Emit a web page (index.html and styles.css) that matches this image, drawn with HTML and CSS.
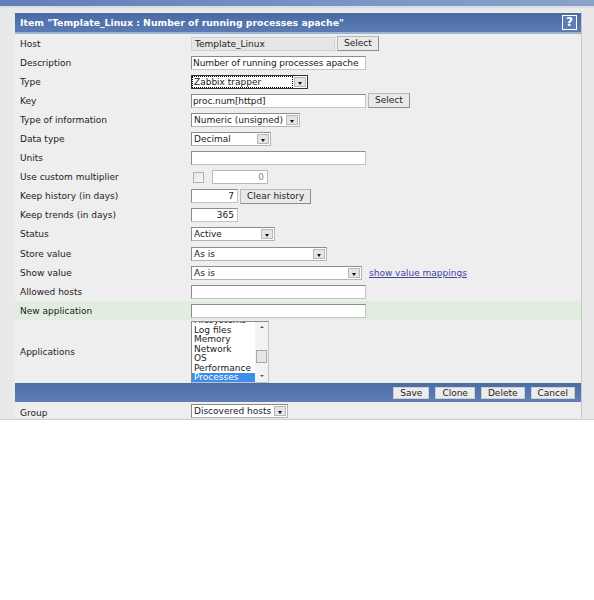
FILE: index.html
```html
<!doctype html>
<html lang="en">
  <head>
    <meta charset="UTF-8" />
    <title>Configuration of items</title>
    <link rel="stylesheet" href="styles.css">
  </head>
  <body>
    <div class="screen">
      <div class="topbar"></div>
      <div class="workspace">
        <form class="item-form">
          <div class="form-header">
            <span class="form-title">Item "Template_Linux : Number of running processes apache"</span>
            <span class="help-icon">?</span>
          </div>

          <div class="row">
            <span class="label">Host</span>
            <span class="field">
              <span class="input readonly w-host">Template_Linux</span>
              <span class="button">Select</span>
            </span>
          </div>
          <div class="row">
            <span class="label">Description</span>
            <span class="field"><span class="input w-wide">Number of running processes apache</span></span>
          </div>
          <div class="row">
            <span class="label">Type</span>
            <span class="field">
              <span class="select w-type"><span class="value focused">Zabbix trapper</span><span class="arrow"></span></span>
            </span>
          </div>
          <div class="row">
            <span class="label">Key</span>
            <span class="field">
              <span class="input w-wide">proc.num[httpd]</span>
              <span class="button">Select</span>
            </span>
          </div>
          <div class="row">
            <span class="label">Type of information</span>
            <span class="field">
              <span class="select w-info"><span class="value">Numeric (unsigned)</span><span class="arrow"></span></span>
            </span>
          </div>
          <div class="row">
            <span class="label">Data type</span>
            <span class="field">
              <span class="select w-data"><span class="value">Decimal</span><span class="arrow"></span></span>
            </span>
          </div>
          <div class="row">
            <span class="label">Units</span>
            <span class="field"><span class="input w-wide"></span></span>
          </div>
          <div class="row">
            <span class="label">Use custom multiplier</span>
            <span class="field">
              <span class="checkbox"></span>
              <span class="input num disabled w-mult">0</span>
            </span>
          </div>
          <div class="row">
            <span class="label">Keep history (in days)</span>
            <span class="field">
              <span class="input num w-days">7</span>
              <span class="button">Clear history</span>
            </span>
          </div>
          <div class="row">
            <span class="label">Keep trends (in days)</span>
            <span class="field"><span class="input num w-days">365</span></span>
          </div>
          <div class="row">
            <span class="label">Status</span>
            <span class="field">
              <span class="select w-status"><span class="value">Active</span><span class="arrow"></span></span>
            </span>
          </div>
          <div class="row">
            <span class="label">Store value</span>
            <span class="field">
              <span class="select w-store"><span class="value">As is</span><span class="arrow"></span></span>
            </span>
          </div>
          <div class="row">
            <span class="label">Show value</span>
            <span class="field">
              <span class="select w-show"><span class="value">As is</span><span class="arrow"></span></span>
              <a class="link" href="#">show value mappings</a>
            </span>
          </div>
          <div class="row">
            <span class="label">Allowed hosts</span>
            <span class="field"><span class="input w-wide"></span></span>
          </div>
          <div class="row highlight">
            <span class="label">New application</span>
            <span class="field"><span class="input w-wide"></span></span>
          </div>
          <div class="row tall">
            <span class="label">Applications</span>
            <span class="field">
              <span class="listbox">
                <span class="options">
                  <span class="option">Filesystems</span>
                  <span class="option">Log files</span>
                  <span class="option">Memory</span>
                  <span class="option">Network</span>
                  <span class="option">OS</span>
                  <span class="option">Performance</span>
                  <span class="option selected">Processes</span>
                </span>
                <span class="scrollbar">
                  <span class="scroll-up"></span>
                  <span class="scroll-track"><span class="scroll-thumb"></span></span>
                  <span class="scroll-down"></span>
                </span>
              </span>
            </span>
          </div>

          <div class="form-footer">
            <span class="button">Save</span>
            <span class="button">Clone</span>
            <span class="button">Delete</span>
            <span class="button">Cancel</span>
          </div>

          <div class="row short">
            <span class="label">Group</span>
            <span class="field">
              <span class="select w-group"><span class="value">Discovered hosts</span><span class="arrow"></span></span>
            </span>
          </div>
        </form>
      </div>
    </div>
  </body>
</html>
```
FILE: styles.css
```css
* {
  margin: 0;
  padding: 0;
  box-sizing: border-box;
}

body {
  font-family: 'DejaVu Sans', Verdana, sans-serif;
  font-size: 9px;
  color: #222;
  background: #fff;
}

.screen {
  height: 420px;
  background: #e9e9e9;
  border-bottom: 1px solid #cfcfcf;
  overflow: hidden;
}

.topbar {
  height: 8px;
  background: linear-gradient(to right, #5f7fb6, #7896c6 60%, #8aa2c9);
  border-bottom: 2px solid #d8dde6;
}

.workspace {
  padding: 4px 11px 0 15px;
  display: flex;
}

.item-form {
  width: 567px;
  background: #eeeeee;
  border-right: 1px solid #c8c8c8;
}

/* title bar */
.form-header {
  height: 21px;
  margin-top: 1px;
  background: linear-gradient(to bottom, #4a6aa5, #5a7bb3);
  border-bottom: 2px solid #9fb3d4;
  display: flex;
  align-items: center;
  justify-content: space-between;
  padding: 0 4px 0 5px;
}

.form-title {
  color: #fff;
  font-weight: bold;
  font-size: 9.3px;
}

.help-icon {
  width: 15px;
  height: 15px;
  border: 1px solid #fff;
  color: #fff;
  font-weight: bold;
  font-size: 12px;
  line-height: 13px;
  text-align: center;
  background: #5b7cb4;
}

/* form rows */
.row {
  display: grid;
  grid-template-columns: 171px 1fr;
  align-items: center;
  height: 19.1px;
  padding-left: 5px;
}

.row.highlight {
  background: #e0eddf;
}

.row.tall {
  height: 63px;
}

.row.short {
  height: 16px;
  align-items: end;
}

.label {
  color: #222;
}

.field {
  display: flex;
  align-items: center;
  gap: 2px;
}

.input {
  display: inline-block;
  height: 14px;
  line-height: 12px;
  padding: 0 1px;
  background: #fff;
  border: 1px solid #8c8c8c;
  border-right-color: #c4c4c4;
  border-bottom-color: #c4c4c4;
  white-space: nowrap;
  overflow: hidden;
}

.input.readonly {
  background: #e6e6e6;
  border-color: #d0d0d0;
  padding-left: 3px;
}

.input.num {
  text-align: right;
  padding-right: 3px;
}

.input.disabled {
  color: #888;
  border-color: #b8b8b8;
}

.w-host { width: 144px; }
.w-wide { width: 175px; letter-spacing: -0.1px; }
.w-mult { width: 56px; margin-left: 6px; }
.w-days { width: 47px; }

.checkbox {
  width: 11px;
  height: 11px;
  margin-left: 2px;
  border: 1px solid #b0b0b0;
  background: linear-gradient(to bottom right, #e4e4e4, #fafafa);
}

.button {
  display: inline-block;
  height: 15px;
  line-height: 13px;
  padding: 0 6px;
  background: #e9e9e9;
  border: 1px solid #b9b9b9;
  border-right-color: #8e8e8e;
  border-bottom-color: #8e8e8e;
  color: #222;
}

/* drop-down lists */
.select {
  display: inline-flex;
  height: 14px;
  background: #fff;
  border: 1px solid #8c8c8c;
  border-right-color: #b5b5b5;
  border-bottom-color: #b5b5b5;
}

.select .value {
  flex: 1;
  line-height: 12px;
  padding: 0 2px;
  white-space: nowrap;
  overflow: hidden;
}

.select .value.focused {
  outline: 1px dotted #000;
  outline-offset: -1px;
  background: #fff;
}

.arrow {
  width: 12px;
  margin: 1px;
  background: #e4e4e4;
  border: 1px solid #b8b8b8;
  position: relative;
}

.arrow::after {
  content: '';
  position: absolute;
  left: 3px;
  top: 4px;
  border-left: 2px solid transparent;
  border-right: 2px solid transparent;
  border-top: 3px solid #111;
}

.w-type { width: 117px; border: 1px solid #333; }
.w-info { width: 109px; }
.w-data { width: 80px; }
.w-status { width: 84px; }
.w-store { width: 136px; }
.w-show { width: 171px; }
.w-group { width: 97px; }

.link {
  color: #43439b;
  margin-left: 5px;
}

/* applications list */
.listbox {
  display: flex;
  width: 78px;
  height: 62px;
  margin-top: 1px;
  background: #fff;
  border: 1px solid #8c8c8c;
  border-right-color: #c4c4c4;
  border-bottom-color: #c4c4c4;
  overflow: hidden;
}

.options {
  flex: 1;
  display: flex;
  flex-direction: column;
  margin-top: -6.5px;
}

.option {
  height: 9.6px;
  line-height: 9.6px;
  padding-left: 2px;
  white-space: nowrap;
}

.option.selected {
  background: #3d8ee8;
  color: #fff;
}

.scrollbar {
  width: 13px;
  display: flex;
  flex-direction: column;
  background: #f3f3f3;
}

.scroll-up,
.scroll-down {
  height: 11px;
  position: relative;
}

.scroll-up::after,
.scroll-down::after {
  content: '';
  position: absolute;
  left: 5px;
  top: 4px;
  border-left: 2px solid transparent;
  border-right: 2px solid transparent;
}

.scroll-up::after {
  border-bottom: 2px solid #555;
}

.scroll-down::after {
  border-top: 2px solid #555;
}

.scroll-track {
  flex: 1;
  padding-top: 17px;
}

.scroll-thumb {
  display: block;
  height: 13px;
  margin: 0 1px;
  background: #e6e6e6;
  border: 1px solid #a8a8a8;
}

/* button bar */
.form-footer {
  height: 19px;
  background: linear-gradient(to bottom, #4c6ca7, #5f7fb5);
  display: flex;
  align-items: center;
  justify-content: flex-end;
  gap: 6px;
  padding-right: 6px;
}

.form-footer .button {
  height: 12px;
  line-height: 10px;
  padding: 0 6px;
  background: #ececec;
  border-color: #d0d0d0;
}
```
